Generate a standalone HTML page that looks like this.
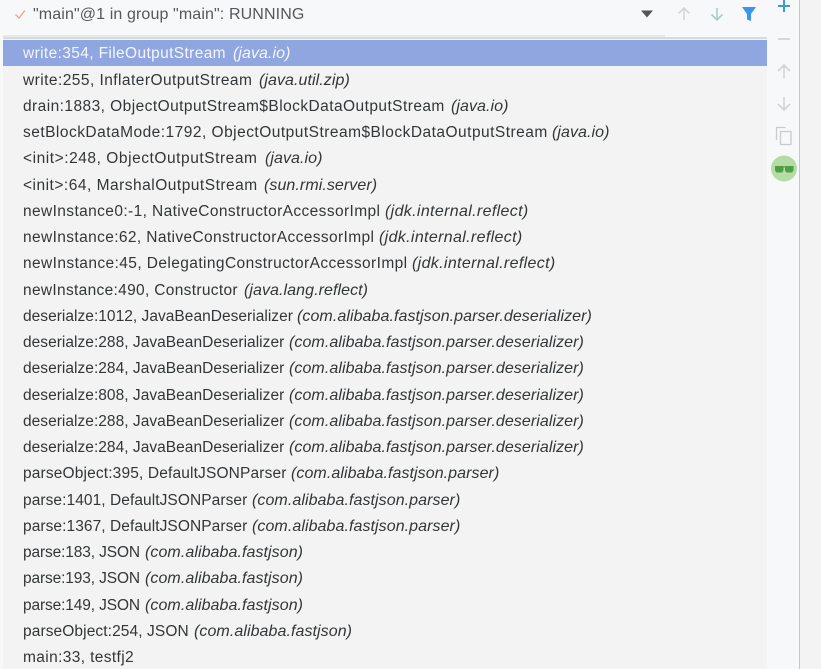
<!DOCTYPE html>
<html>
<head>
<meta charset="utf-8">
<style>
html,body{margin:0;padding:0;background:#fff;}
#p{position:relative;width:821px;height:669px;overflow:hidden;background:#f7f8fa;font-family:"Liberation Sans","Noto Sans CJK SC",sans-serif;font-size:15.5px;color:#333638;}
#list{position:absolute;left:3px;top:39px;width:764px;height:630px;background:#f3f3f3;}
#side{position:absolute;left:767px;top:0;width:32px;height:669px;background:#f7f8fa;}
#r{position:absolute;left:799px;top:0;width:22px;height:669px;background:#f3f3f3;border-left:1px solid #c4c6c8;box-sizing:border-box;}
.bar0{position:absolute;left:3px;top:35px;width:662px;height:2px;background:#e4eae7;}
.bar{position:absolute;left:3px;top:37px;width:764px;height:2px;background:#d5dcd9;}
.sel{position:absolute;left:3px;top:40px;width:764px;height:26px;background:#8fa6e0;}
.t{position:absolute;left:23px;white-space:nowrap;line-height:20px;height:20px;}
.t i{position:absolute;top:0;white-space:nowrap;font-size:16px;letter-spacing:.07px;}
.t i.x{letter-spacing:.34px;}
.w{color:#f4f6fc;}
svg{position:absolute;left:0;top:0;}
</style>
</head>
<body>
<div id="p">
<div id="list"></div>
<div id="side"></div>
<div id="r"></div>
<div class="bar0"></div>
<div class="bar"></div>
<div class="sel"></div>
<div class="t" style="left:33px;top:5px;color:#55585a;font-size:16px;letter-spacing:.12px;">"main"@1 in group "main": RUNNING</div>

<div class="t w" style="top:44px;letter-spacing:.37px">write:354, FileOutputStream<i style="left:210px">(java.io)</i></div>
<div class="t" style="top:71px;letter-spacing:.45px">write:255, InflaterOutputStream<i style="left:236px">(java.util.zip)</i></div>
<div class="t" style="top:97px;letter-spacing:.44px">drain:1883, ObjectOutputStream$BlockDataOutputStream<i style="left:428px">(java.io)</i></div>
<div class="t" style="top:123px;letter-spacing:.48px">setBlockDataMode:1792, ObjectOutputStream$BlockDataOutputStream<i style="left:529px">(java.io)</i></div>
<div class="t" style="top:149px;letter-spacing:.55px">&lt;init&gt;:248, ObjectOutputStream<i style="left:242px">(java.io)</i></div>
<div class="t" style="top:176px;letter-spacing:.5px">&lt;init&gt;:64, MarshalOutputStream<i style="left:241px">(sun.rmi.server)</i></div>
<div class="t" style="top:202px;letter-spacing:.39px">newInstance0:-1, NativeConstructorAccessorImpl<i class="x" style="left:362px">(jdk.internal.reflect)</i></div>
<div class="t" style="top:228px;letter-spacing:.38px">newInstance:62, NativeConstructorAccessorImpl<i class="x" style="left:356px">(jdk.internal.reflect)</i></div>
<div class="t" style="top:254px;letter-spacing:.41px">newInstance:45, DelegatingConstructorAccessorImpl<i class="x" style="left:389px">(jdk.internal.reflect)</i></div>
<div class="t" style="top:281px;letter-spacing:.32px">newInstance:490, Constructor<i style="left:221px">(java.lang.reflect)</i></div>
<div class="t" style="top:307px;letter-spacing:.03px">deserialze:1012, JavaBeanDeserializer<i style="left:274px">(com.alibaba.fastjson.parser.deserializer)</i></div>
<div class="t" style="top:333px;letter-spacing:.03px">deserialze:288, JavaBeanDeserializer<i style="left:266px">(com.alibaba.fastjson.parser.deserializer)</i></div>
<div class="t" style="top:359px;letter-spacing:.03px">deserialze:284, JavaBeanDeserializer<i style="left:266px">(com.alibaba.fastjson.parser.deserializer)</i></div>
<div class="t" style="top:386px;letter-spacing:.03px">deserialze:808, JavaBeanDeserializer<i style="left:266px">(com.alibaba.fastjson.parser.deserializer)</i></div>
<div class="t" style="top:412px;letter-spacing:.03px">deserialze:288, JavaBeanDeserializer<i style="left:266px">(com.alibaba.fastjson.parser.deserializer)</i></div>
<div class="t" style="top:438px;letter-spacing:.03px">deserialze:284, JavaBeanDeserializer<i style="left:266px">(com.alibaba.fastjson.parser.deserializer)</i></div>
<div class="t" style="top:464px;letter-spacing:.15px">parseObject:395, DefaultJSONParser<i style="left:268px">(com.alibaba.fastjson.parser)</i></div>
<div class="t" style="top:491px;letter-spacing:.07px">parse:1401, DefaultJSONParser<i style="left:229px">(com.alibaba.fastjson.parser)</i></div>
<div class="t" style="top:517px;letter-spacing:.07px">parse:1367, DefaultJSONParser<i style="left:229px">(com.alibaba.fastjson.parser)</i></div>
<div class="t" style="top:543px;letter-spacing:-.13px">parse:183, JSON<i style="left:122px">(com.alibaba.fastjson)</i></div>
<div class="t" style="top:569px;letter-spacing:-.13px">parse:193, JSON<i style="left:122px">(com.alibaba.fastjson)</i></div>
<div class="t" style="top:596px;letter-spacing:-.13px">parse:149, JSON<i style="left:122px">(com.alibaba.fastjson)</i></div>
<div class="t" style="top:622px;letter-spacing:.1px">parseObject:254, JSON<i style="left:171px">(com.alibaba.fastjson)</i></div>
<div class="t" style="top:648px;letter-spacing:.37px">main:33, testfj2</div>

<svg width="821" height="669" viewBox="0 0 821 669" fill="none">
<path d="M15.500 14.500l3.500 3.500 6-7.500" stroke="#e8a78f" stroke-width="1.400"/>
<path d="M641 10.500h12l-6 7z" fill="#555"/>
<path d="M684 20V8M678.500 13.500L684 8l5.500 5.500" stroke="#d3d5d6" stroke-width="1.600"/>
<path d="M717 8v12M711.500 14.500L717 20l5.500-5.500" stroke="#a5cfc8" stroke-width="1.600"/>
<path d="M742 7h14l-5 7v7l-4-1.500V14z" fill="#3d94ee"/>
<path d="M784 0v12M778 6h12" stroke="#3a9fc4" stroke-width="2"/>
<path d="M778 39h12" stroke="#cfd0d1" stroke-width="1.600"/>
<path d="M784 78V65M778 71l6-6 6 6" stroke="#d3d4d5" stroke-width="1.600"/>
<path d="M784 97v13M778 104l6 6 6-6" stroke="#d3d4d5" stroke-width="1.600"/>
<path d="M776.500 140v-12.500h9M780.500 131.500h10.500v13h-10.500z" stroke="#c9cacb" stroke-width="1.300"/>
<circle cx="784" cy="168.500" r="13" fill="#b4dca4"/>
<path d="M775 166h8.500v4.500l-1.500 2h-5.500l-1.500-2zM785 166h8.500v4.500l-1.500 2h-5.500l-1.500-2z" fill="#4f9e46"/>
<path d="M783 167h2.500" stroke="#4f9e46" stroke-width="1.200"/>
</svg>
</div>
</body>
</html>
